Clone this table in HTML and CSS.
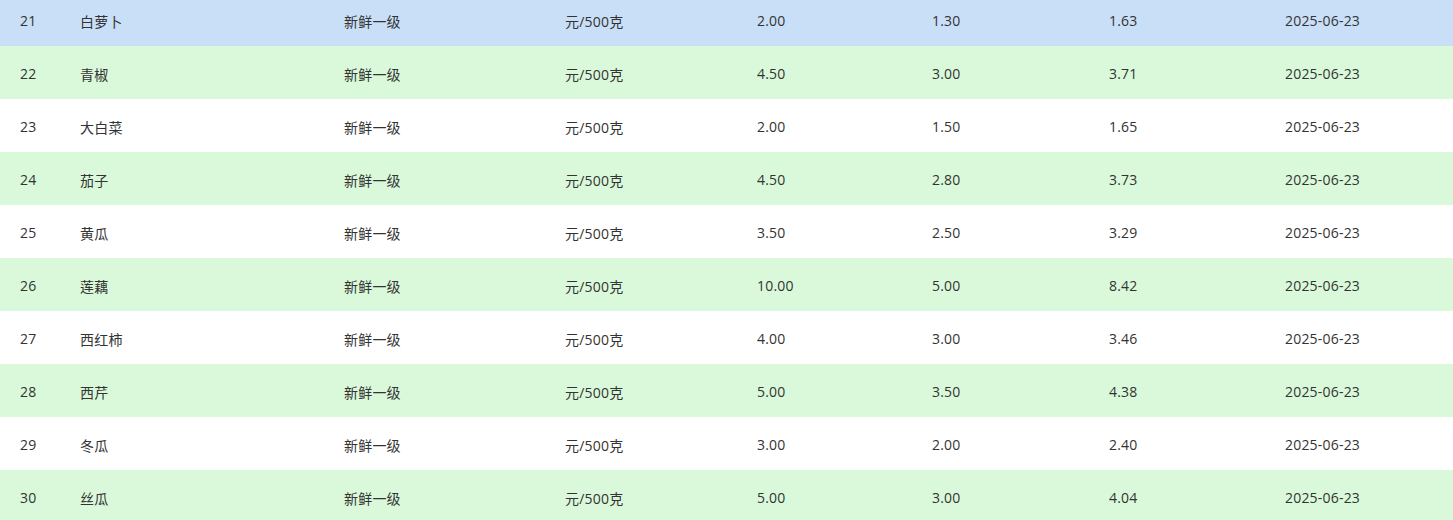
FILE: index.html
```html
<!DOCTYPE html>
<html lang="zh">
<head>
<meta charset="utf-8">
<link rel="stylesheet" href="styles.css">
</head>
<body>
<div class="table">
  <div class="row sel"><span>21</span><span>白萝卜</span><span>新鲜一级</span><span>元/500克</span><span>2.00</span><span>1.30</span><span>1.63</span><span>2025-06-23</span></div>
  <div class="row alt"><span>22</span><span>青椒</span><span>新鲜一级</span><span>元/500克</span><span>4.50</span><span>3.00</span><span>3.71</span><span>2025-06-23</span></div>
  <div class="row"><span>23</span><span>大白菜</span><span>新鲜一级</span><span>元/500克</span><span>2.00</span><span>1.50</span><span>1.65</span><span>2025-06-23</span></div>
  <div class="row alt"><span>24</span><span>茄子</span><span>新鲜一级</span><span>元/500克</span><span>4.50</span><span>2.80</span><span>3.73</span><span>2025-06-23</span></div>
  <div class="row"><span>25</span><span>黄瓜</span><span>新鲜一级</span><span>元/500克</span><span>3.50</span><span>2.50</span><span>3.29</span><span>2025-06-23</span></div>
  <div class="row alt"><span>26</span><span>莲藕</span><span>新鲜一级</span><span>元/500克</span><span>10.00</span><span>5.00</span><span>8.42</span><span>2025-06-23</span></div>
  <div class="row"><span>27</span><span>西红柿</span><span>新鲜一级</span><span>元/500克</span><span>4.00</span><span>3.00</span><span>3.46</span><span>2025-06-23</span></div>
  <div class="row alt"><span>28</span><span>西芹</span><span>新鲜一级</span><span>元/500克</span><span>5.00</span><span>3.50</span><span>4.38</span><span>2025-06-23</span></div>
  <div class="row"><span>29</span><span>冬瓜</span><span>新鲜一级</span><span>元/500克</span><span>3.00</span><span>2.00</span><span>2.40</span><span>2025-06-23</span></div>
  <div class="row alt"><span>30</span><span>丝瓜</span><span>新鲜一级</span><span>元/500克</span><span>5.00</span><span>3.00</span><span>4.04</span><span>2025-06-23</span></div>
</div>
</body>
</html>
```
FILE: styles.css
```css
html, body {
  margin: 0;
  padding: 0;
  background: #ffffff;
  overflow: hidden;
}
body {
  font-family: "Open Sans", "Noto Sans CJK SC", sans-serif;
  font-size: 14px;
  color: #333333;
}
.table {
  margin-top: -7px;
  display: flex;
  flex-direction: column;
}
.row {
  box-sizing: border-box;
  display: grid;
  grid-template-columns: 60px 264px 221px 192px 175px 177px 176px 1fr;
  align-items: center;
  height: 53px;
  padding-top: 2px;
  padding-left: 20px;
  background: #ffffff;
}
.row.alt {
  background: #daf9da;
}
.row.sel {
  background: #c9dff8;
}
.row span {
  white-space: nowrap;
  letter-spacing: 0.2px;
}
```
